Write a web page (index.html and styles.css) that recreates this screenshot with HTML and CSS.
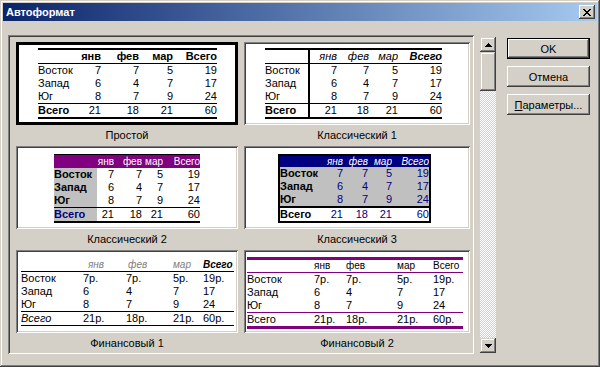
FILE: index.html
```html
<!DOCTYPE html>
<html lang="ru">
<head>
  <meta charset="UTF-8">
  <title>Автоформат</title>
  <link rel="stylesheet" href="styles.css">
</head>
<body>

<div class="window">
  <div class="titlebar">
    <span class="title">Автоформат</span>
    <div class="close">
      <svg width="8" height="7" viewBox="0 0 8 7"><path d="M0 0h2v1h-2z M6 0h2v1h-2z M1 1h2v1h-2z M5 1h2v1h-2z M2 2h4v1h-4z M3 3h2v1h-2z M2 4h4v1h-4z M1 5h2v1h-2z M5 5h2v1h-2z M0 6h2v1h-2z M6 6h2v1h-2z"/></svg>
    </div>
  </div>

  <div class="content">
    <div class="listbox">
      <div class="grid">

        <!-- Простой -->
        <div class="item">
          <div class="pv sel">
            <table class="t t-simple">
              <colgroup><col><col><col><col><col></colgroup>
              <tr class="hd"><th class="l"></th><th>янв</th><th>фев</th><th>мар</th><th>Всего</th></tr>
              <tr><td class="l">Восток</td><td>7</td><td>7</td><td>5</td><td>19</td></tr>
              <tr><td class="l">Запад</td><td>6</td><td>4</td><td>7</td><td>17</td></tr>
              <tr><td class="l">Юг</td><td>8</td><td>7</td><td>9</td><td>24</td></tr>
              <tr class="tot"><td class="l">Всего</td><td>21</td><td>18</td><td>21</td><td>60</td></tr>
            </table>
          </div>
          <div class="cap">Простой</div>
        </div>

        <!-- Классический 1 -->
        <div class="item">
          <div class="pv">
            <table class="t t-classic1">
              <colgroup><col><col><col><col><col></colgroup>
              <tr class="hd"><th class="l"></th><th>янв</th><th>фев</th><th>мар</th><th class="b">Всего</th></tr>
              <tr><td class="l">Восток</td><td>7</td><td>7</td><td>5</td><td>19</td></tr>
              <tr><td class="l">Запад</td><td>6</td><td>4</td><td>7</td><td>17</td></tr>
              <tr><td class="l">Юг</td><td>8</td><td>7</td><td>9</td><td>24</td></tr>
              <tr class="tot"><td class="l">Всего</td><td>21</td><td>18</td><td>21</td><td>60</td></tr>
            </table>
          </div>
          <div class="cap">Классический 1</div>
        </div>

        <!-- Классический 2 -->
        <div class="item">
          <div class="pv">
            <table class="t t-classic2">
              <colgroup><col><col><col><col><col></colgroup>
              <tr class="hd"><th class="l"></th><th>янв</th><th>фев</th><th>мар</th><th>Всего</th></tr>
              <tr><td class="l">Восток</td><td>7</td><td>7</td><td>5</td><td>19</td></tr>
              <tr><td class="l">Запад</td><td>6</td><td>4</td><td>7</td><td>17</td></tr>
              <tr><td class="l">Юг</td><td>8</td><td>7</td><td>9</td><td>24</td></tr>
              <tr class="tot"><td class="l">Всего</td><td>21</td><td>18</td><td>21</td><td>60</td></tr>
            </table>
          </div>
          <div class="cap">Классический 2</div>
        </div>

        <!-- Классический 3 -->
        <div class="item">
          <div class="pv">
            <table class="t t-classic3">
              <colgroup><col><col><col><col><col></colgroup>
              <tr class="hd"><th class="l"></th><th>янв</th><th>фев</th><th>мар</th><th>Всего</th></tr>
              <tr><td class="l">Восток</td><td>7</td><td>7</td><td>5</td><td>19</td></tr>
              <tr><td class="l">Запад</td><td>6</td><td>4</td><td>7</td><td>17</td></tr>
              <tr><td class="l">Юг</td><td>8</td><td>7</td><td>9</td><td>24</td></tr>
              <tr class="tot"><td class="l">Всего</td><td>21</td><td>18</td><td>21</td><td>60</td></tr>
            </table>
          </div>
          <div class="cap">Классический 3</div>
        </div>

        <!-- Финансовый 1 -->
        <div class="item">
          <div class="pv">
            <table class="t t-fin1">
              <colgroup><col><col><col><col><col></colgroup>
              <tr class="hd"><th class="l"></th><th class="g">янв</th><th class="g">фев</th><th class="g">мар</th><th class="b">Всего</th></tr>
              <tr><td class="l">Восток</td><td>7р.</td><td>7р.</td><td>5р.</td><td>19р.</td></tr>
              <tr><td class="l">Запад</td><td>6</td><td>4</td><td>7</td><td>17</td></tr>
              <tr><td class="l">Юг</td><td>8</td><td>7</td><td>9</td><td>24</td></tr>
              <tr class="tot"><td class="l">Всего</td><td>21р.</td><td>18р.</td><td>21р.</td><td>60р.</td></tr>
            </table>
          </div>
          <div class="cap">Финансовый 1</div>
        </div>

        <!-- Финансовый 2 -->
        <div class="item">
          <div class="pv">
            <table class="t t-fin2">
              <colgroup><col><col><col><col><col></colgroup>
              <tr class="hd"><th class="l"></th><th>янв</th><th>фев</th><th>мар</th><th>Всего</th></tr>
              <tr><td class="l">Восток</td><td>7р.</td><td>7р.</td><td>5р.</td><td>19р.</td></tr>
              <tr><td class="l">Запад</td><td>6</td><td>4</td><td>7</td><td>17</td></tr>
              <tr><td class="l">Юг</td><td>8</td><td>7</td><td>9</td><td>24</td></tr>
              <tr class="tot"><td class="l">Всего</td><td>21р.</td><td>18р.</td><td>21р.</td><td>60р.</td></tr>
            </table>
          </div>
          <div class="cap">Финансовый 2</div>
        </div>

      </div>
    </div>

    <div class="scroll">
      <div class="sbtn">
        <svg width="7" height="4" viewBox="0 0 7 4"><path d="M3 0h1v1h-1z M2 1h3v1h-3z M1 2h5v1h-5z M0 3h7v1h-7z"/></svg>
      </div>
      <div class="thumb"></div>
      <div class="track"></div>
      <div class="sbtn">
        <svg width="7" height="4" viewBox="0 0 7 4"><path d="M0 0h7v1h-7z M1 1h5v1h-5z M2 2h3v1h-3z M3 3h1v1h-1z"/></svg>
      </div>
    </div>

    <div class="buttons">
      <button class="btn default">OK</button>
      <button class="btn">Отмена</button>
      <button class="btn"><u>П</u>араметры...</button>
    </div>
  </div>
</div>

</body>
</html>
```

FILE: styles.css
```css
body {
  margin: 0;
  background: #d4d0c8;
  font: 11px "Liberation Sans", Arial, sans-serif;
}

/* окно */
.window {
  width: 600px;
  height: 367px;
  box-sizing: border-box;
  padding: 3px;
  background: #d4d0c8;
  box-shadow: inset -1px -1px #404040, inset 1px 1px #d4d0c8,
              inset -2px -2px #808080, inset 2px 2px #fff;
}
.titlebar {
  height: 18px;
  display: flex;
  align-items: center;
  justify-content: space-between;
  padding: 0 2px 0 3px;
  background: linear-gradient(to right, #0a246a, #a6caf0);
}
.title {
  color: #fff;
  font-weight: bold;
  font-size: 11px;
}
.close {
  width: 16px;
  height: 14px;
  box-sizing: border-box;
  display: flex;
  align-items: center;
  justify-content: center;
  background: #d4d0c8;
  box-shadow: inset -1px -1px #404040, inset 1px 1px #fff,
              inset -2px -2px #808080, inset 2px 2px #d4d0c8;
}

.content {
  display: flex;
  align-items: flex-start;
  padding: 14px 0 0 5px;
}

/* список образцов */
.listbox {
  width: 466px;
  height: 319px;
  box-sizing: border-box;
  padding: 7px 0 0 8px;
  overflow: hidden;
  box-shadow: inset 1px 1px #808080, inset -1px -1px #fff,
              inset 2px 2px #404040, inset -2px -2px #d4d0c8;
}
.grid {
  display: grid;
  grid-template-columns: 222px 226px;
  column-gap: 6px;
}
.item {
  display: flex;
  flex-direction: column;
  height: 104px;
}
.pv {
  height: 83px;
  box-sizing: border-box;
  padding: 2px;
  background: #fff;
  overflow: hidden;
  box-shadow: inset 1px 1px #808080, inset -1px -1px #fff,
              inset 2px 2px #404040, inset -2px -2px #d4d0c8;
}
.pv.sel {
  padding: 0;
  border: 3px solid #000;
  box-shadow: none;
}
.cap {
  height: 21px;
  line-height: 21px;
  text-align: center;
  color: #000;
}

/* таблицы */
.t {
  border-collapse: separate;
  border-spacing: 0;
  table-layout: fixed;
  font: 11px "Liberation Sans", Arial, sans-serif;
  color: #000;
}
.t th, .t td {
  padding: 0;
  height: 13px;
  line-height: 13px;
  font-weight: normal;
  text-align: right;
  white-space: nowrap;
  overflow: hidden;
}
.t .l { text-align: left; }

/* Простой */
.t-simple { width: 179px; margin: 3px 0 0 19px; }
.t-simple col:nth-child(1) { width: 42px; }
.t-simple col:nth-child(2) { width: 21px; }
.t-simple col:nth-child(3) { width: 38px; }
.t-simple col:nth-child(4) { width: 34px; }
.t-simple col:nth-child(5) { width: 44px; }
.t-simple .hd th { font-weight: bold; border-top: 2px solid #000; border-bottom: 1px solid #000; }
.t-simple .tot td { border-top: 1px solid #000; border-bottom: 2px solid #000; }
.t-simple .tot .l { font-weight: bold; }

/* Классический 1 */
.t-classic1 { width: 177px; margin: 4px 0 0 19px; }
.t-classic1 col:nth-child(1) { width: 45px; }
.t-classic1 col:nth-child(2) { width: 27px; }
.t-classic1 col:nth-child(3) { width: 32px; }
.t-classic1 col:nth-child(4) { width: 29px; }
.t-classic1 col:nth-child(5) { width: 44px; }
.t-classic1 .l { border-right: 2px solid #000; }
.t-classic1 .hd th { font-style: italic; border-top: 2px solid #000; border-bottom: 1px solid #000; }
.t-classic1 .hd .b { font-weight: bold; }
.t-classic1 .tot td { border-top: 1px solid #000; border-bottom: 2px solid #000; }
.t-classic1 .tot .l { font-weight: bold; }

/* Классический 2 */
.t-classic2 { width: 146px; margin: 6px 0 0 36px; }
.t-classic2 col:nth-child(1) { width: 43px; }
.t-classic2 col:nth-child(2) { width: 17px; }
.t-classic2 col:nth-child(3) { width: 28px; }
.t-classic2 col:nth-child(4) { width: 21px; }
.t-classic2 col:nth-child(5) { width: 37px; }
.t-classic2 .hd th { background: #800080; color: #fff; font-size: 10px; border-top: 1px solid #000; }
.t-classic2 .hd th:nth-child(2) { padding-right: 0; }
.t-classic2 td.l { background: #c0c0c0; font-weight: bold; }
.t-classic2 .tot td { border-top: 1px solid #000; border-bottom: 2px solid #000; }
.t-classic2 .tot .l { color: #000080; }

/* Классический 3 */
.t-classic3 { width: 153px; margin: 6px 0 0 32px; border: 2px solid #000; }
.t-classic3 col:nth-child(1) { width: 42px; }
.t-classic3 col:nth-child(2) { width: 21px; }
.t-classic3 col:nth-child(3) { width: 25px; }
.t-classic3 col:nth-child(4) { width: 24px; }
.t-classic3 col:nth-child(5) { width: 37px; }
.t-classic3 .hd th { background: #000080; color: #fff; font-style: italic; font-size: 10px; height: 11px; line-height: 11px; }
.t-classic3 td { background: #c0c0c0; color: #000080; }
.t-classic3 td.l { color: #000; font-weight: bold; }
.t-classic3 .tot td { background: #fff; border-top: 2px solid #000; }

/* Финансовый 1 */
.t-fin1 { width: 213px; margin: 7px 0 0 3px; }
.t-fin1 col:nth-child(1) { width: 62px; }
.t-fin1 col:nth-child(2) { width: 43px; }
.t-fin1 col:nth-child(3) { width: 47px; }
.t-fin1 col:nth-child(4) { width: 30px; }
.t-fin1 col:nth-child(5) { width: 31px; }
.t-fin1 th, .t-fin1 td { text-align: left; }
.t-fin1 .hd th { height: 12px; line-height: 12px; font-size: 10px; font-style: italic; border-bottom: 1px solid #000; }
.t-fin1 .hd .g { color: #808080; }
.t-fin1 .hd th:nth-child(2) { padding-left: 5px; }
.t-fin1 .hd th:nth-child(3) { padding-left: 2px; }
.t-fin1 .hd .b { font-weight: bold; }
.t-fin1 .tot td { border-top: 1px solid #000; border-bottom: 1px solid #000; }
.t-fin1 .tot .l { font-style: italic; }

/* Финансовый 2 */
.t-fin2 { width: 216px; margin: 5px 0 0 1px; }
.t-fin2 col:nth-child(1) { width: 67px; }
.t-fin2 col:nth-child(2) { width: 32px; }
.t-fin2 col:nth-child(3) { width: 51px; }
.t-fin2 col:nth-child(4) { width: 36px; }
.t-fin2 col:nth-child(5) { width: 30px; }
.t-fin2 th, .t-fin2 td { text-align: left; }
.t-fin2 .hd th { height: 12px; line-height: 12px; font-size: 10px; border-top: 3px solid #800080; border-bottom: 1px solid #800080; }
.t-fin2 .tot td { border-top: 1px solid #800080; border-bottom: 3px solid #800080; }

/* полоса прокрутки */
.scroll {
  width: 16px;
  height: 316px;
  margin: 2px 0 0 6px;
  display: flex;
  flex-direction: column;
}
.sbtn, .thumb {
  box-sizing: border-box;
  background: #d4d0c8;
  box-shadow: inset -1px -1px #404040, inset 1px 1px #d4d0c8,
              inset -2px -2px #808080, inset 2px 2px #fff;
}
.sbtn {
  height: 15px;
  display: flex;
  align-items: center;
  justify-content: center;
}
.thumb { height: 39px; }
.track {
  flex: 1;
  background: repeating-conic-gradient(#fff 0 25%, #d4d0c8 0 50%) 0 0 / 2px 2px;
}

/* кнопки */
.buttons {
  display: flex;
  flex-direction: column;
  gap: 7px;
  margin: 3px 0 0 11px;
}
.btn {
  width: 83px;
  height: 21px;
  padding: 0;
  border: none;
  background: #d4d0c8;
  color: #000;
  font: 11px "Liberation Sans", Arial, sans-serif;
  box-shadow: inset -1px -1px #404040, inset 1px 1px #fff,
              inset -2px -2px #808080, inset 2px 2px #d4d0c8;
}
.btn.default {
  box-shadow: inset 0 0 0 1px #000, inset -2px -2px #404040,
              inset 2px 2px #fff, inset -3px -3px #808080;
}
```
